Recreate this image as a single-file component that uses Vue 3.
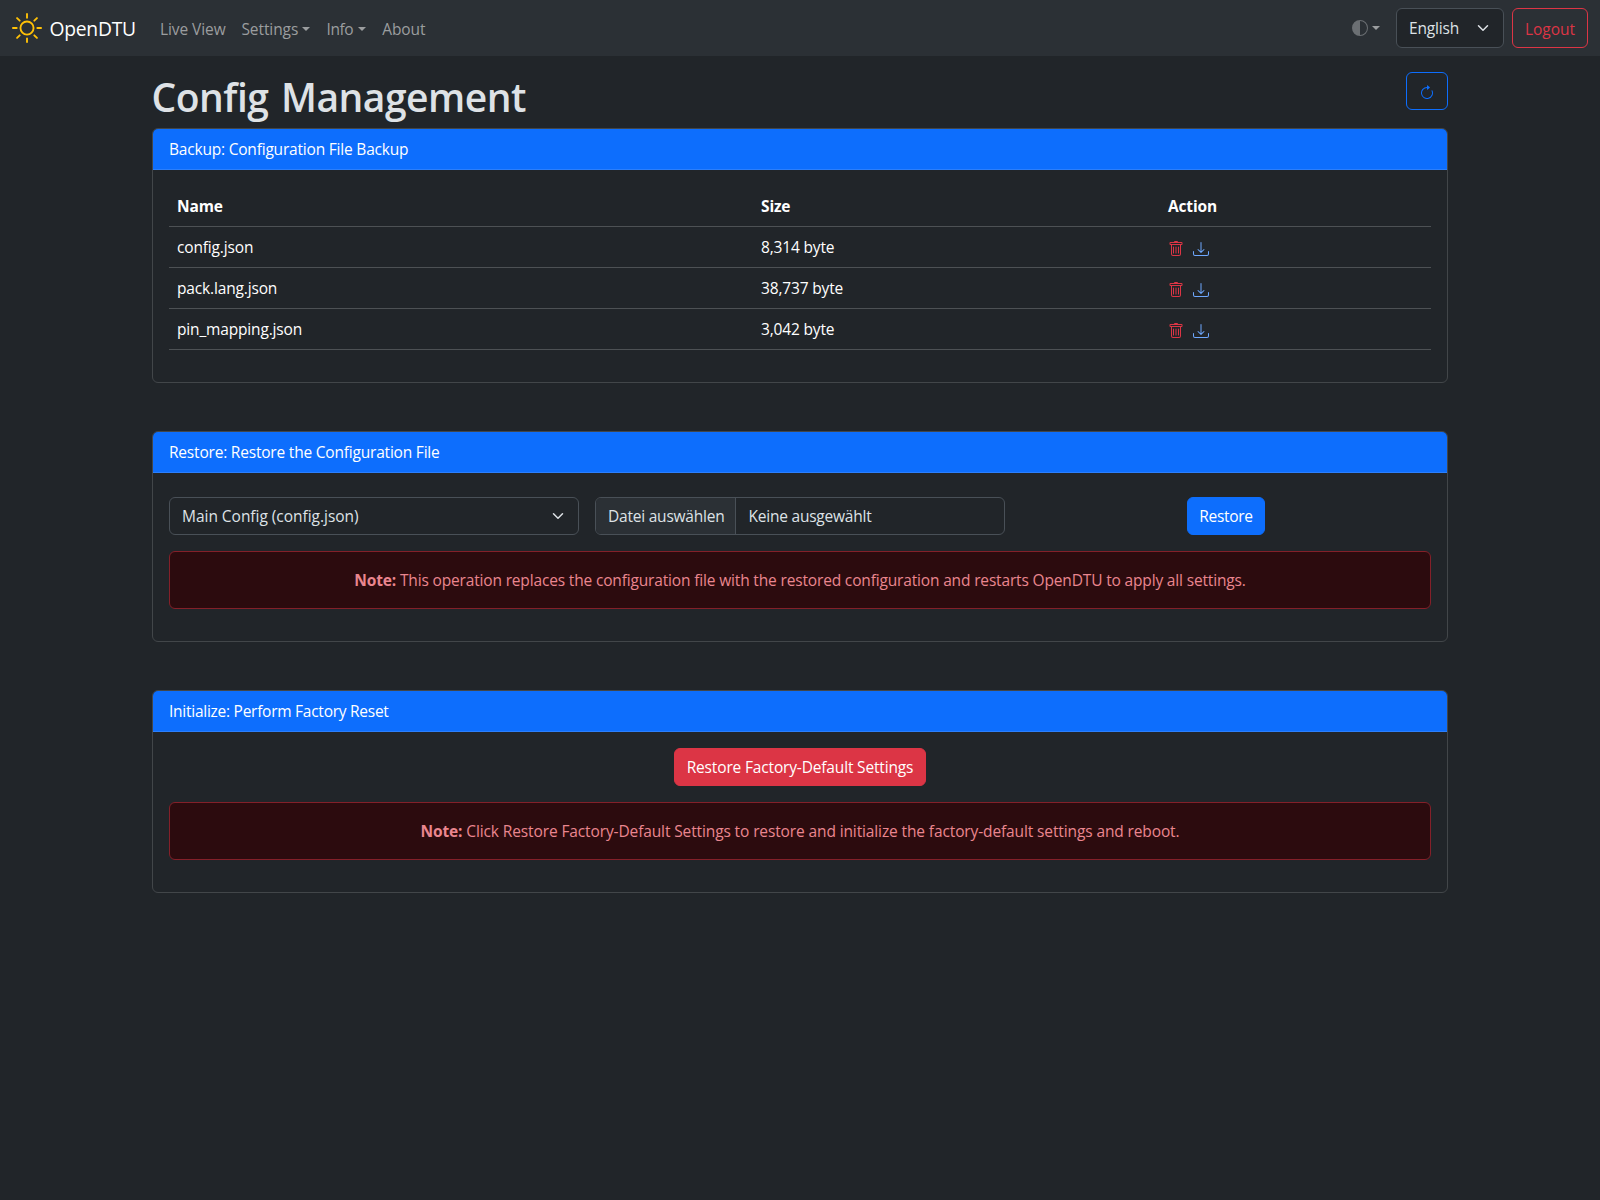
<script setup>
import { h } from 'vue'

const icons = {
  sun: ['M8 11a3 3 0 1 1 0-6 3 3 0 0 1 0 6m0 1a4 4 0 1 0 0-8 4 4 0 0 0 0 8M8 0a.5.5 0 0 1 .5.5v2a.5.5 0 0 1-1 0v-2A.5.5 0 0 1 8 0m0 13a.5.5 0 0 1 .5.5v2a.5.5 0 0 1-1 0v-2A.5.5 0 0 1 8 13m8-5a.5.5 0 0 1-.5.5h-2a.5.5 0 0 1 0-1h2a.5.5 0 0 1 .5.5M3 8a.5.5 0 0 1-.5.5h-2a.5.5 0 0 1 0-1h2A.5.5 0 0 1 3 8m10.657-5.657a.5.5 0 0 1 0 .707l-1.414 1.415a.5.5 0 1 1-.707-.708l1.414-1.414a.5.5 0 0 1 .707 0m-9.193 9.193a.5.5 0 0 1 0 .707L3.05 13.657a.5.5 0 0 1-.707-.707l1.414-1.414a.5.5 0 0 1 .707 0m9.193 2.121a.5.5 0 0 1-.707 0l-1.414-1.414a.5.5 0 0 1 .707-.707l1.414 1.414a.5.5 0 0 1 0 .707M4.464 4.465a.5.5 0 0 1-.707 0L2.343 3.05a.5.5 0 1 1 .707-.707l1.414 1.414a.5.5 0 0 1 0 .708'],
  half: ['M8 15A7 7 0 1 0 8 1zm0 1A8 8 0 1 1 8 0a8 8 0 0 1 0 16'],
  refresh: ['M8 3a5 5 0 1 0 4.546 2.914.5.5 0 0 1 .908-.417A6 6 0 1 1 8 2z', 'M8 4.466V.534a.25.25 0 0 1 .41-.192l2.36 1.966c.12.1.12.284 0 .384L8.41 4.658A.25.25 0 0 1 8 4.466'],
  trash: ['M5.5 5.5A.5.5 0 0 1 6 6v6a.5.5 0 0 1-1 0V6a.5.5 0 0 1 .5-.5m2.5 0a.5.5 0 0 1 .5.5v6a.5.5 0 0 1-1 0V6a.5.5 0 0 1 .5-.5m3 .5a.5.5 0 0 0-1 0v6a.5.5 0 0 0 1 0z', 'M14.5 3a1 1 0 0 1-1 1H13v9a2 2 0 0 1-2 2H5a2 2 0 0 1-2-2V4h-.5a1 1 0 0 1-1-1V2a1 1 0 0 1 1-1H6a1 1 0 0 1 1-1h2a1 1 0 0 1 1 1h3.500a1 1 0 0 1 1 1zM4.118 4 4 4.059V13a1 1 0 0 0 1 1h6a1 1 0 0 0 1-1V4.059L11.882 4zM2.500 3h11V2h-11z'],
  download: ['M.5 9.900a.5.5 0 0 1 .5.5v2.500a1 1 0 0 0 1 1h12a1 1 0 0 0 1-1v-2.500a.5.5 0 0 1 1 0v2.500a2 2 0 0 1-2 2H2a2 2 0 0 1-2-2v-2.500a.5.5 0 0 1 .5-.5', 'M7.646 11.854a.5.5 0 0 0 .708 0l3-3a.5.5 0 0 0-.708-.708L8.500 10.293V1.500a.5.5 0 0 0-1 0v8.793L5.354 8.146a.5.5 0 1 0-.708.708z'],
}

const Icon = ({ name, size = 16 }) =>
  h('svg', { viewBox: '0 0 16 16', width: size, height: size, fill: 'currentColor', 'aria-hidden': 'true' },
    icons[name].map((d) => h('path', { d })))
Icon.props = ['name', 'size']

const files = [
  { name: 'config.json', size: '8,314 byte' },
  { name: 'pack.lang.json', size: '38,737 byte' },
  { name: 'pin_mapping.json', size: '3,042 byte' },
]
</script>

<template>
  <div class="page">
    <nav class="navbar">
      <a class="brand"><Icon name="sun" :size="30" class="sun" /><span>OpenDTU</span></a>
      <a class="link live">Live View</a>
      <a class="link settings">Settings<i class="caret"></i></a>
      <a class="link info">Info<i class="caret"></i></a>
      <a class="link">About</a>
      <div class="tools">
        <a class="theme"><Icon name="half" /><i class="caret"></i></a>
        <div class="field lang">English<svg class="chev" viewBox="0 0 16 16"><path d="m2 5 6 6 6-6" /></svg></div>
        <button class="btn logout">Logout</button>
      </div>
    </nav>

    <main class="container">
      <header class="title">
        <h1>Config Management</h1>
        <button class="btn refresh"><Icon name="refresh" /></button>
      </header>

      <section class="card">
        <div class="card-header">Backup: Configuration File Backup</div>
        <div class="card-body">
          <table>
            <thead>
              <tr><th class="c1">Name</th><th class="c2">Size</th><th>Action</th></tr>
            </thead>
            <tbody>
              <tr v-for="f in files" :key="f.name">
                <td>{{ f.name }}</td>
                <td>{{ f.size }}</td>
                <td><span class="actions"><Icon name="trash" class="del" /><Icon name="download" class="down" /></span></td>
              </tr>
            </tbody>
          </table>
        </div>
      </section>

      <section class="card">
        <div class="card-header">Restore: Restore the Configuration File</div>
        <div class="card-body">
          <div class="row">
            <div class="field source">Main Config (config.json)<svg class="chev" viewBox="0 0 16 16"><path d="m2 5 6 6 6-6" /></svg></div>
            <div class="file"><span class="choose">Datei auswählen</span><span class="chosen">Keine ausgewählt</span></div>
            <div class="submit"><button class="btn primary">Restore</button></div>
          </div>
          <div class="alert"><p><b>Note:</b> This operation replaces the configuration file with the restored configuration and restarts OpenDTU to apply all settings.</p></div>
        </div>
      </section>

      <section class="card">
        <div class="card-header init">Initialize: Perform Factory Reset</div>
        <div class="card-body reset">
          <button class="btn danger">Restore Factory-Default Settings</button>
          <div class="alert wide"><p><b>Note:</b> Click Restore Factory-Default Settings to restore and initialize the factory-default settings and reboot.</p></div>
        </div>
      </section>
    </main>
  </div>
</template>

<style>
body { background: #212529; }
</style>

<style scoped>
.page, .page * { box-sizing: border-box; }
.page {
  min-height: 1200px;
  background: #212529;
  color: #dee2e6;
  font: 15.5px/24px "Open Sans", "Noto Sans", sans-serif;
  letter-spacing: -0.16px;
}
svg { display: block; flex: none; }

.navbar { display: flex; align-items: center; height: 56px; padding: 0 12px; background: #2b3035; }
.brand { display: flex; align-items: center; width: 140px; gap: 7.5px; color: #fff; font-size: 19.3px; line-height: 30px; letter-spacing: -0.25px; }
.brand span { padding-top: 2px; }
.sun { color: #ffc107; }
.link { display: flex; align-items: center; padding: 1px 8px 0; color: #9b9d9f; white-space: nowrap; letter-spacing: -0.08px; }
.live { width: 81.4px; }
.settings { width: 85.1px; }
.info { width: 55.7px; letter-spacing: -0.4px; }
.caret { margin-left: auto; border-top: 4.8px solid; border-left: 4.8px solid transparent; border-right: 4.8px solid transparent; }
.tools { display: flex; align-items: center; margin-left: auto; }
.theme { display: flex; align-items: center; width: 28px; margin-right: 16px; color: #9b9d9f; }
.theme svg { color: #6b6f73; }
.field { display: flex; align-items: center; height: 38px; padding: 0 12px; border: 1px solid #495057; border-radius: 6px; background: #212529; }
.source { letter-spacing: -0.03px; }
.chev { width: 16px; height: 12px; margin-left: auto; fill: none; stroke: #dee2e6; stroke-width: 2; stroke-linecap: round; stroke-linejoin: round; }
.lang { width: 108px; height: 40px; margin-right: 8px; }
.btn { height: 38px; padding: 0; border: 1px solid; border-radius: 6px; background: transparent; font: inherit; letter-spacing: inherit; }
.logout { width: 76px; height: 40px; padding-top: 1px; color: #dc3545; letter-spacing: -0.05px; }

.container { width: 1296px; margin: 0 auto; padding-top: 16px; }
.title { display: flex; align-items: flex-start; justify-content: space-between; height: 56px; }
h1 { margin: 1px 0 0 -0.5px; font-size: 39px; line-height: 48px; font-weight: 600; letter-spacing: -0.5px; word-spacing: 3px; }
.refresh { display: flex; align-items: center; justify-content: center; width: 42px; padding-top: 4px; color: #0d6efd; }

.card { margin-bottom: 48px; border: 1px solid #424649; border-radius: 6px; overflow: hidden; }
.card-header { height: 41px; padding: 8px 16px; border-bottom: 1px solid #2c7ffb; background: #0d6efd; color: #fff; letter-spacing: -0.2px; }
.init { letter-spacing: -0.26px; }
.card-body { padding: 16px 16px 32px; }
table { width: 100%; border-collapse: separate; border-spacing: 0; table-layout: fixed; color: #fff; }
th, td { height: 41px; padding: 8px; border-bottom: 1px solid #4d5154; text-align: left; line-height: 24px; }
.c1 { width: 584px; }
.c2 { width: 407px; }
.actions { display: flex; gap: 9px; height: 24px; padding-top: 6px; }
.del { color: #dc3545; }
.down { color: #6ea8fe; }

.row { display: grid; grid-template-columns: 410px 410px 1fr; gap: 16px; padding-top: 8px; }
.file { display: flex; align-items: center; height: 38px; border: 1px solid #495057; border-radius: 6px; overflow: hidden; letter-spacing: -0.22px; }
.choose { width: 140px; height: 36px; padding: 6px 12px; border-right: 1px solid #495057; background: #2b3035; white-space: nowrap; }
.chosen { padding-left: 12.5px; }
.submit { display: flex; justify-content: center; }
.primary { width: 78px; border-color: #0d6efd; background: #0d6efd; color: #fff; letter-spacing: -0.3px; }
.danger { width: 252px; border-color: #dc3545; background: #dc3545; color: #fff; }
.alert { width: 100%; height: 58px; margin-top: 16px; padding: 16px; border: 1px solid #842029; border-radius: 6px; background: #2c0b0e; color: #ea868f; text-align: center; }
.wide { letter-spacing: -0.12px; }
.alert p { margin: 0; }
.reset { display: flex; flex-direction: column; align-items: center; }
</style>
